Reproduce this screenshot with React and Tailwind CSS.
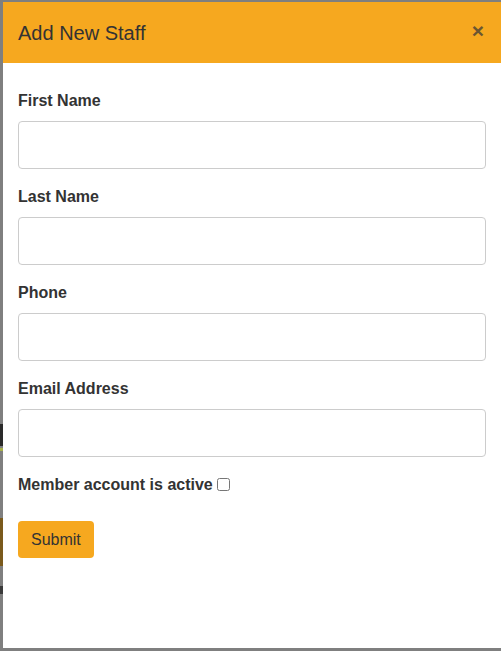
import React from "react";

function Field({ label }) {
  return (
    <div className="mb-[15px]">
      <label className="block text-[16px] leading-[24px] font-bold text-[#333] pt-[1px] mb-[8px]">{label}</label>
      <input type="text" className="block w-full h-[48px] rounded-[4px] border border-[#ccc] bg-white px-3 outline-none" />
    </div>
  );
}

export default function App() {
  return (
    <div
      className="relative w-[501px] h-[651px] bg-[#7f7f7f] pl-[3px] pt-[2px] pb-[3px] overflow-hidden"
      style={{ fontFamily: '"Liberation Sans", Arial, sans-serif' }}
    >
      <div className="absolute left-0 top-[424px] w-[3px] h-[22px] bg-[#2a2a2a]" />
      <div className="absolute left-0 top-[448px] w-[3px] h-[3px] bg-[#a6b04a]" />
      <div className="absolute left-0 top-[518px] w-[3px] h-[48px] bg-[#7a5a1c]" />
      <div className="absolute left-0 top-[586px] w-[3px] h-[8px] bg-[#3a3a3a]" />
      <div className="h-[646px] bg-white flex flex-col">
        <div className="h-[61px] bg-[#f6a81f] flex items-center justify-between pl-[15px] pr-[17px]">
          <h4 className="text-[20px] leading-[24px] text-[#333] font-normal">Add New Staff</h4>
          <button className="text-[21px] leading-none font-bold text-[#6b5632] -mt-[5px]">×</button>
        </div>
        <div className="px-[15px] pt-[25px]">
          <Field label="First Name" />
          <Field label="Last Name" />
          <Field label="Phone" />
          <Field label="Email Address" />
          <div className="flex items-center pt-[1px] text-[16px] leading-[24px] font-bold text-[#333]">
            <span>Member account is active</span>
            <input type="checkbox" className="ml-[4px] w-[13px] h-[13px] -mt-[1px]" />
          </div>
          <button className="mt-[24px] h-[37px] px-[13px] rounded-[4px] bg-[#f6a81f] text-[16px] text-[#333]">
            Submit
          </button>
        </div>
      </div>
    </div>
  );
}
